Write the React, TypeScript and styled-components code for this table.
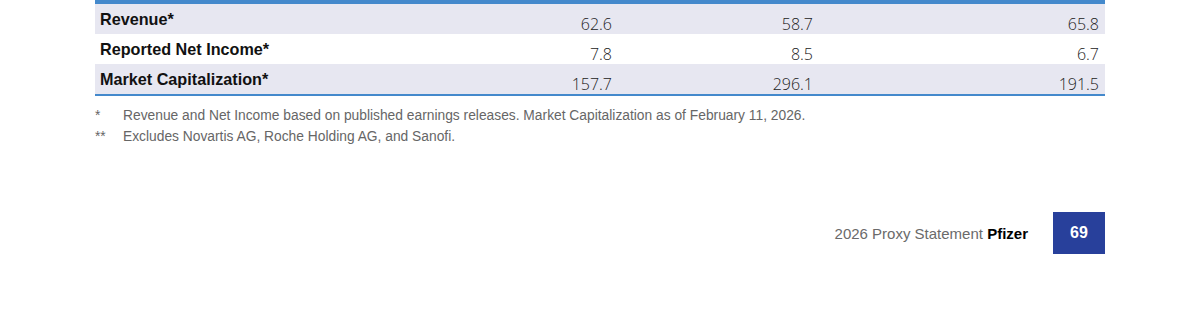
import React from "react";
import styled, { createGlobalStyle } from "styled-components";

const Global = createGlobalStyle`
  html, body { margin: 0; padding: 0; background: #ffffff; }
  body { width: 1200px; height: 315px; overflow: hidden; font-family: "Liberation Sans", Arial, sans-serif; }
`;

const Page = styled.div`
  width: 1200px;
  height: 315px;
  display: flex;
  flex-direction: column;
  padding: 0 95px;
  box-sizing: border-box;
`;

const Table = styled.div`
  display: grid;
  grid-template-columns: 300px 223px 201px 286px;
  border-top: 4px solid #4489cc;
  border-bottom: 2px solid #4489cc;
`;

const Row = styled.div<{ $shaded: boolean }>`
  display: contents;
  & > div {
    background: ${(p) => (p.$shaded ? "#e7e7f1" : "#ffffff")};
  }
`;

const Label = styled.div`
  height: 30px;
  box-sizing: border-box;
  padding: 6px 0 0 5px;
  font-family: "Liberation Sans", Arial, sans-serif;
  font-weight: 700;
  font-size: 16.2px;
  line-height: 18px;
  color: #111;
`;

const Num = styled.div`
  height: 30px;
  box-sizing: border-box;
  padding: 9px 6px 0 0;
  text-align: right;
  font-family: "Open Sans", "Noto Sans", sans-serif;
  font-weight: 350;
  font-size: 16px;
  line-height: 22px;
  color: #222;
`;

const Notes = styled.div`
  margin-top: 11px;
  display: flex;
  flex-direction: column;
  gap: 4px;
`;

const Note = styled.div`
  display: flex;
  font-family: "Liberation Sans", Arial, sans-serif;
  font-size: 13.8px;
  line-height: 17px;
  color: #666;
`;

const Mark = styled.span`
  width: 28px;
  flex: none;
`;

const Footer = styled.div`
  margin-top: 67px;
  display: flex;
  justify-content: flex-end;
  align-items: center;
  gap: 25px;
`;

const Doc = styled.div`
  font-family: "Liberation Sans", Arial, sans-serif;
  font-size: 15px;
  color: #6a6a6a;
  b { color: #000; font-weight: 700; }
`;

const PageNo = styled.div`
  width: 52px;
  height: 42px;
  background: #28409b;
  color: #fff;
  display: flex;
  align-items: center;
  justify-content: center;
  font-family: "Liberation Sans", Arial, sans-serif;
  font-weight: 700;
  font-size: 16px;
`;

const rows = [
  { label: "Revenue*", v: ["62.6", "58.7", "65.8"] },
  { label: "Reported Net Income*", v: ["7.8", "8.5", "6.7"] },
  { label: "Market Capitalization*", v: ["157.7", "296.1", "191.5"] },
];

export default function App() {
  return (
    <>
      <Global />
      <Page>
        <Table>
          {rows.map((r, i) => (
            <Row key={r.label} $shaded={i % 2 === 0}>
              <Label>{r.label}</Label>
              {r.v.map((v, j) => (
                <Num key={j}>{v}</Num>
              ))}
            </Row>
          ))}
        </Table>
        <Notes>
          <Note>
            <Mark>*</Mark>
            Revenue and Net Income based on published earnings releases. Market Capitalization as of February 11, 2026.
          </Note>
          <Note>
            <Mark>**</Mark>
            Excludes Novartis AG, Roche Holding AG, and Sanofi.
          </Note>
        </Notes>
        <Footer>
          <Doc>
            2026 Proxy Statement <b>Pfizer</b>
          </Doc>
          <PageNo>69</PageNo>
        </Footer>
      </Page>
    </>
  );
}
